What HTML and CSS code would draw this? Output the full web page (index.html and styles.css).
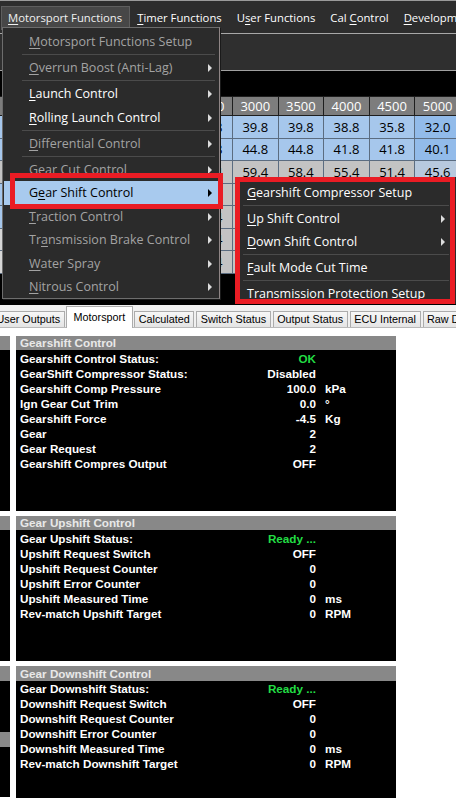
FILE: index.html
```html
<!DOCTYPE html>
<html>
<head>
<meta charset="utf-8">
<title>Motorsport Functions</title>
<link rel="stylesheet" href="styles.css">
</head>
<body>
<div class="app">
  <div class="menubar">
    <span class="mb-item active"><u>M</u>otorsport Functions</span>
    <span class="mb-item"><u>T</u>imer Functions</span>
    <span class="mb-item">U<u>s</u>er Functions</span>
    <span class="mb-item">Cal <u>C</u>ontrol</span>
    <span class="mb-item"><u>D</u>evelopment</span>
  </div>
  <div class="toolbar"></div>
  <div class="grid-area">
    <table class="map">
      <tr class="hdr"><td>0</td><td>500</td><td>1000</td><td>1500</td><td>2000</td><td>2500</td><td>3000</td><td>3500</td><td>4000</td><td>4500</td><td>5000</td></tr>
      <tr class="r1"><td>28.0</td><td>30.0</td><td>32.0</td><td>35.0</td><td>37.8</td><td>38.8</td><td>39.8</td><td>39.8</td><td>38.8</td><td>35.8</td><td class="hot">32.0</td></tr>
      <tr class="r2"><td>34.0</td><td>36.0</td><td>38.0</td><td>40.0</td><td>42.8</td><td>44.8</td><td>44.8</td><td>44.8</td><td>41.8</td><td>41.8</td><td class="hot">40.1</td></tr>
      <tr class="r3"><td>46.0</td><td>48.0</td><td>52.0</td><td>55.0</td><td>57.4</td><td>59.4</td><td>59.4</td><td>58.4</td><td>55.4</td><td>51.4</td><td class="hot">45.6</td></tr>
      <tr class="r4"><td>30.0</td><td>58.0</td><td>60.0</td><td>62.0</td><td>64.4</td><td>66.4</td><td>66.4</td><td>64.4</td><td>60.4</td><td>56.4</td><td class="hot">50.6</td></tr>
      <tr class="r4"><td>31.0</td><td>62.0</td><td>64.0</td><td>66.0</td><td>68.4</td><td>70.4</td><td>70.4</td><td>68.4</td><td>64.4</td><td>60.4</td><td class="hot">54.6</td></tr>
      <tr class="r5"><td>32.0</td><td>64.0</td><td>66.0</td><td>68.0</td><td>70.4</td><td>72.4</td><td>72.4</td><td>70.4</td><td>66.4</td><td>62.4</td><td class="hot">56.6</td></tr>
      <tr class="r5"><td>33.0</td><td>66.0</td><td>68.0</td><td>70.0</td><td>72.4</td><td>74.4</td><td>74.4</td><td>72.4</td><td>68.4</td><td>64.4</td><td class="hot">58.6</td></tr>
    </table>
  </div>
  <div class="tabs">
    <span class="tab">User Outputs</span>
    <span class="tab active">Motorsport</span>
    <span class="tab">Calculated</span>
    <span class="tab">Switch Status</span>
    <span class="tab">Output Status</span>
    <span class="tab">ECU Internal</span>
    <span class="tab">Raw Data</span>
  </div>
  <div class="panels">
    <div class="side-col">
      <div class="side-box b1"><div class="ph"></div><div class="pb"></div></div>
      <div class="side-box b2"><div class="ph"></div><div class="pb"></div></div>
      <div class="side-box b3"><div class="ph"></div><div class="pb"></div><div class="ph"></div><div class="pb"></div></div>
    </div>
    <div class="main-col">
      <section class="panel p1">
        <div class="ph">Gearshift Control</div>
        <div class="pb">
          <div class="row"><span class="lbl">Gearshift Control Status:</span><span class="val ok">OK</span><span class="unit"></span></div>
          <div class="row"><span class="lbl">GearShift Compressor Status:</span><span class="val">Disabled</span><span class="unit"></span></div>
          <div class="row"><span class="lbl">Gearshift Comp Pressure</span><span class="val">100.0</span><span class="unit">kPa</span></div>
          <div class="row"><span class="lbl">Ign Gear Cut Trim</span><span class="val">0.0</span><span class="unit">°</span></div>
          <div class="row"><span class="lbl">Gearshift Force</span><span class="val">-4.5</span><span class="unit">Kg</span></div>
          <div class="row"><span class="lbl">Gear</span><span class="val">2</span><span class="unit"></span></div>
          <div class="row"><span class="lbl">Gear Request</span><span class="val">2</span><span class="unit"></span></div>
          <div class="row"><span class="lbl">Gearshift Compres Output</span><span class="val">OFF</span><span class="unit"></span></div>
        </div>
      </section>
      <section class="panel p2">
        <div class="ph">Gear Upshift Control</div>
        <div class="pb">
          <div class="row"><span class="lbl">Gear Upshift Status:</span><span class="val ok">Ready ...</span><span class="unit"></span></div>
          <div class="row"><span class="lbl">Upshift Request Switch</span><span class="val">OFF</span><span class="unit"></span></div>
          <div class="row"><span class="lbl">Upshift Request Counter</span><span class="val">0</span><span class="unit"></span></div>
          <div class="row"><span class="lbl">Upshift Error Counter</span><span class="val">0</span><span class="unit"></span></div>
          <div class="row"><span class="lbl">Upshift Measured Time</span><span class="val">0</span><span class="unit">ms</span></div>
          <div class="row"><span class="lbl">Rev-match Upshift Target</span><span class="val">0</span><span class="unit">RPM</span></div>
        </div>
      </section>
      <section class="panel p3">
        <div class="ph">Gear Downshift Control</div>
        <div class="pb">
          <div class="row"><span class="lbl">Gear Downshift Status:</span><span class="val ok">Ready ...</span><span class="unit"></span></div>
          <div class="row"><span class="lbl">Downshift Request Switch</span><span class="val">OFF</span><span class="unit"></span></div>
          <div class="row"><span class="lbl">Downshift Request Counter</span><span class="val">0</span><span class="unit"></span></div>
          <div class="row"><span class="lbl">Downshift Error Counter</span><span class="val">0</span><span class="unit"></span></div>
          <div class="row"><span class="lbl">Downshift Measured Time</span><span class="val">0</span><span class="unit">ms</span></div>
          <div class="row"><span class="lbl">Rev-match Downshift Target</span><span class="val">0</span><span class="unit">RPM</span></div>
        </div>
      </section>
    </div>
  </div>

  <div class="menu">
    <div class="mi dim"><span class="t"><u>M</u>otorsport Functions Setup</span></div>
    <div class="sep"></div>
    <div class="mi dim"><span class="t"><u>O</u>verrun Boost (Anti-Lag)</span><span class="arr"></span></div>
    <div class="sep"></div>
    <div class="mi"><span class="t"><u>L</u>aunch Control</span><span class="arr"></span></div>
    <div class="mi"><span class="t"><u>R</u>olling Launch Control</span><span class="arr"></span></div>
    <div class="sep"></div>
    <div class="mi dim"><span class="t"><u>D</u>ifferential Control</span><span class="arr"></span></div>
    <div class="sep"></div>
    <div class="mi dim"><span class="t">Gear C<u>u</u>t Control</span><span class="arr"></span></div>
    <div class="mi sel"><span class="t">G<u>e</u>ar Shift Control</span><span class="arr"></span></div>
    <div class="mi dim"><span class="t"><u>T</u>raction Control</span><span class="arr"></span></div>
    <div class="mi dim"><span class="t">Tr<u>a</u>nsmission Brake Control</span><span class="arr"></span></div>
    <div class="mi dim"><span class="t"><u>W</u>ater Spray</span><span class="arr"></span></div>
    <div class="mi dim"><span class="t"><u>N</u>itrous Control</span><span class="arr"></span></div>
  </div>
  <div class="redbox rb1"></div>

  <div class="submenu">
    <div class="mi"><span class="t"><u>G</u>earshift Compressor Setup</span></div>
    <div class="sep"></div>
    <div class="mi"><span class="t"><u>U</u>p Shift Control</span><span class="arr"></span></div>
    <div class="mi"><span class="t"><u>D</u>own Shift Control</span><span class="arr"></span></div>
    <div class="sep"></div>
    <div class="mi"><span class="t"><u>F</u>ault Mode Cut Time</span></div>
    <div class="sep"></div>
    <div class="mi"><span class="t"><u>T</u>ransmission Protection Setup</span></div>
  </div>
  <div class="redbox rb2"></div>
</div>
</body>
</html>
```

FILE: styles.css
```css
* { box-sizing: border-box; }
html, body { margin: 0; padding: 0; background: #ffffff; }
.app {
  position: relative;
  width: 456px;
  height: 800px;
  overflow: hidden;
  font-family: "Open Sans", "Noto Sans", sans-serif;
}
u { text-decoration: underline; text-underline-offset: 2px; text-decoration-thickness: 1px; }

/* menubar */
.menubar {
  height: 34px;
  background: #2d2d2d;
  border-top: 1px solid #9a9a9a;
  border-bottom: 1px solid #a8a8a8;
  display: flex;
  align-items: flex-start;
  padding: 5px 0 0 1px;
  white-space: nowrap;
}
.mb-item {
  color: #ffffff;
  font-size: 11.3px;
  line-height: 22px;
  height: 24px;
  padding: 0 6.5px;
  border: 1px solid transparent;
}
.mb-item.active { background: #474747; border-color: #5e5e5e; color: #f0f0f0; padding: 0 6.5px 0 6px; }

.toolbar {
  height: 37px;
  background: #2f2f2f;
  border-bottom: 1px solid #a0a0a0;
}

/* grid */
.grid-area {
  height: 234px;
  background: #000;
  padding: 25px 0 0 0;
  overflow: hidden;
}
.map { border-collapse: collapse; table-layout: fixed; width: 501.6px; margin-left: -41.6px; }
.map td {
  width: 45.6px;
  height: 22.5px;
  padding: 0;
  text-align: center;
  font-size: 13px;
  color: #000;
  border: 1px solid #5b6c80;
}
.map .hdr td { background: #7d7d7d; color: #fff; border-color: #1e1e1e; height: 19px; }
.map .r1 td { background: #a6c7ec; }
.map .r2 td { background: #a6c7ec; }
.map .r3 td { background: #c3c3c3; }
.map .r4 td { background: #c3c3c3; }
.map .r4 td:first-child { background: #a6c7ec; }
.map .r5 td { background: #c3c3c3; }
.map .r5 td:first-child { background: #d6d6d6; }
.map td.hot { background: #92bbea; }
.map .r3 td.hot, .map .r4 td.hot, .map .r5 td.hot { background: #b7c9de; }

/* tabs */
.tabs {
  height: 23px;
  background: #f0f0f0;
  display: flex;
  align-items: flex-end;
  margin-left: -8px;
  border-bottom: 1px solid #b9b9b9;
  font-family: "Liberation Sans", Arial, sans-serif;
  font-size: 10.8px;
  white-space: nowrap;
}
.tab {
  height: 16px;
  line-height: 14px;
  padding: 0 3.5px;
  margin-right: 2px;
  border: 1px solid #acacac;
  border-bottom: none;
  background: linear-gradient(#f7f7f7, #e4e4e4);
  color: #000;
}
.tab.active {
  height: 22px;
  line-height: 20px;
  background: #fff;
  padding: 0 7px;
  margin: 0 1px 0 -1px;
  position: relative;
  top: 1px;
}

/* panels */
.panels {
  display: flex;
  gap: 6px;
  padding-top: 8px;
  background: #fff;
  height: 472px;
}
.side-col { width: 10px; display: flex; flex-direction: column; gap: 5px; }
.side-box { display: flex; flex-direction: column; }
.side-box .ph { height: 14px; background: #888; }
.side-box .pb { height: 161px; background: #000; }
.side-box.b2 .pb { height: 131px; }
.side-box.b3 .ph { height: 15px; }
.side-box.b3 .pb:nth-child(2) { height: 51px; }
.side-box.b3 .pb:nth-child(4) { height: 50px; }
.main-col { width: 380px; display: flex; flex-direction: column; gap: 5px; }
.panel { display: flex; flex-direction: column; }
.panel .ph {
  height: 14px;
  background: #888888;
  color: #e8e8e8;
  font-family: "Liberation Sans", Arial, sans-serif;
  font-weight: bold;
  font-size: 11.7px;
  line-height: 14px;
  padding-left: 4px;
}
.panel .pb {
  background: #000;
  padding-top: 1px;
  font-family: "Liberation Sans", Arial, sans-serif;
  font-weight: bold;
  font-size: 11.7px;
  color: #fff;
}
.p1 .pb { height: 161px; }
.p2 .pb { height: 131px; }
.p3 .ph { height: 15px; line-height: 15px; }
.p3 .pb { height: 117px; padding-top: 0; }
.row { display: flex; height: 15px; line-height: 15px; white-space: nowrap; }
.lbl { width: 220px; padding-left: 4px; }
.val { width: 80px; text-align: right; }
.val.ok { color: #22dd44; }
.unit { padding-left: 9px; }

/* menus */
.menu {
  position: absolute;
  left: 2px;
  top: 27px;
  width: 218px;
  height: 272px;
  background: #2b2b2b;
  border: 1px solid #6d6d6d;
  border-right-color: #8f8585;
  padding: 2px 1px;
  font-size: 12.5px;
  box-shadow: 1px 1px 0 #1a1a1a;
}
.mi {
  position: relative;
  height: 23.5px;
  line-height: 23px;
  padding-left: 25px;
  color: #fff;
  white-space: nowrap;
}
.mi.dim { color: #a3a3a3; }
.mi.sel { background: #a8caee; color: #000; }
.sep { height: 1px; background: #4b4b4b; margin: 0.75px 3px 0.75px 18px; }
.arr {
  position: absolute;
  right: 6px;
  top: 8px;
  width: 0; height: 0;
  border-left: 4px solid #dcdcdc;
  border-top: 4px solid transparent;
  border-bottom: 4px solid transparent;
}
.mi.sel .arr { border-left-color: #000; }
.redbox {
  position: absolute;
  border: 5px solid #ea1c24;
}
.rb1 { left: 10px; top: 173px; width: 213px; height: 36px; }
.rb2 { left: 235px; top: 177px; width: 220px; height: 127px; }

.submenu {
  position: absolute;
  left: 236px;
  top: 177px;
  width: 220px;
  height: 127px;
  background: #2b2b2b;
  padding: 4px 0 0;
  font-size: 12.5px;
}
.submenu .mi { height: 23px; padding-left: 11px; }
.submenu .sep { margin: 1px 7px; }
.submenu .arr { right: 11px; }
```
